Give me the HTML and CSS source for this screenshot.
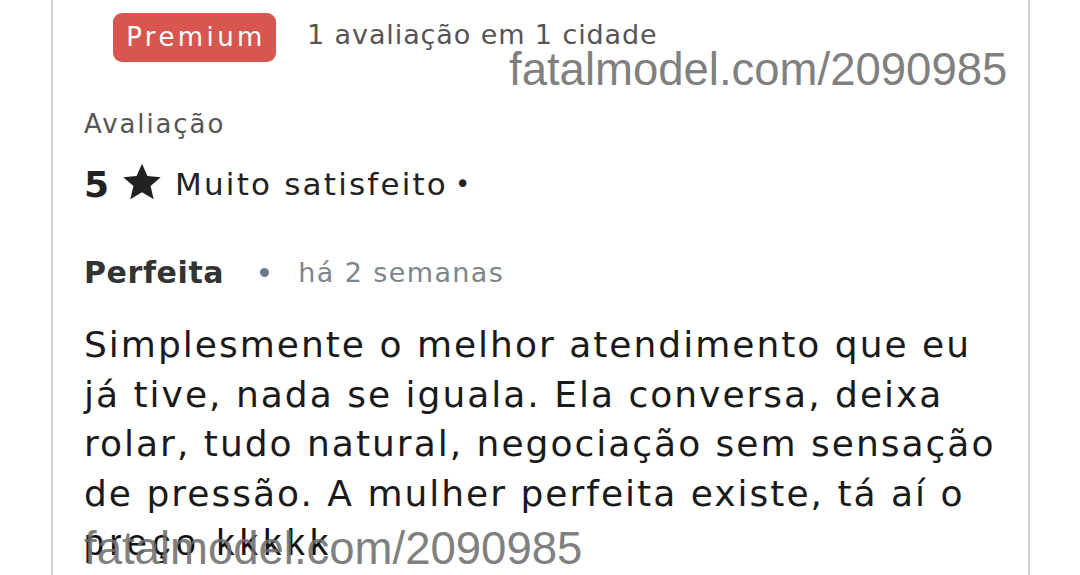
FILE: index.html
```html
<html>
    <head>
        <meta charset="utf-8" />
        <title>Avaliação</title>
        <link rel="stylesheet" href="styles.css">
    </head>
    <body>
        <div class="card">
            <div class="header">
                <span class="badge">Premium</span>
                <span class="count">1 avaliação em 1 cidade</span>
            </div>
            <div class="label">Avaliação</div>
            <div class="rating">
                <span class="score">5</span>
                <svg class="star" viewBox="0 0 24 24" width="42" height="42">
                    <path d="M12 1.6l3.1 7 7.6.7-5.8 5 1.8 7.5L12 17.8l-6.7 4 1.8-7.5-5.8-5 7.6-.7z" fill="#222222" />
                </svg>
                <span class="verdict">Muito satisfeito</span>
                <span class="dot">&bull;</span>
            </div>
            <div class="title_row">
                <span class="title">Perfeita</span>
                <span class="sep"></span>
                <span class="when">há 2 semanas</span>
            </div>
            <p class="review">
                Simplesmente o melhor atendimento que eu<br />
                já tive, nada se iguala. Ela conversa, deixa<br />
                rolar, tudo natural, negociação sem sensação<br />
                de pressão. A mulher perfeita existe, tá aí o<br />
                <span class="edited">preço kkkkk</span>
            </p>
            <span class="watermark top">fatalmodel.com/2090985</span>
            <span class="watermark bottom">fatalmodel.com/2090985</span>
        </div>
    </body>
</html>
```

FILE: styles.css
```css
body {
    margin: 0px;
    padding: 0px;
    background-color: white;
    overflow: hidden;
}

.card {
    position: relative;
    box-sizing: border-box;
    margin-left: 51px;
    width: 979px;
    height: 575px;
    padding: 13px 0px 0px 31px;
    border-left: 2px solid #cfcfcf;
    border-right: 2px solid #cfcfcf;
    font-family: 'DejaVu Sans', 'Open Sans', sans-serif;
    color: #1c1c1c;
}

.header {
    display: flex;
    align-items: flex-start;
    gap: 31px;
    margin-left: 29px;
    height: 49px;
}

.badge {
    box-sizing: border-box;
    height: 49px;
    width: 163px;
    padding-left: 3px;
    line-height: 49px;
    text-align: center;
    background-color: #d9554f;
    color: white;
    border-radius: 9px;
    font-size: 26px;
    letter-spacing: 3.4px;
}

.count {
    margin-top: 6px;
    color: #555555;
    font-size: 27px;
    letter-spacing: 0.9px;
}

.label {
    margin-top: 45px;
    color: #555555;
    font-size: 26px;
    line-height: 34px;
    letter-spacing: 1.9px;
}

.rating {
    display: flex;
    align-items: center;
    margin-top: 23px;
    height: 40px;
    color: #222222;
}

.score {
    font-size: 36px;
    font-weight: 700;
}

.star {
    margin-left: 12px;
    margin-top: -4px;
}

.verdict {
    margin-left: 12px;
    font-size: 31px;
    letter-spacing: 2.2px;
}

.dot {
    margin-left: 7px;
    font-size: 26px;
}

.title_row {
    display: flex;
    align-items: center;
    margin-top: 48px;
    height: 40px;
}

.title {
    font-size: 30px;
    font-weight: 700;
    color: #333333;
    letter-spacing: 0.6px;
}

.sep {
    width: 9px;
    height: 9px;
    margin: 0px 29px 0px 36px;
    border-radius: 50%;
    background-color: #6e7a86;
}

.when {
    font-size: 27px;
    color: #7d858c;
    letter-spacing: 1.4px;
}

.review {
    margin: 28px 0px 0px 0px;
    font-size: 36px;
    line-height: 49.5px;
    letter-spacing: 2px;
    color: #1a1a1a;
}

.edited {
    font-family: 'Liberation Sans', Arial, sans-serif;
    color: #111111;
    letter-spacing: 5.4px;
}

.watermark {
    position: absolute;
    font-family: 'Liberation Sans', Arial, sans-serif;
    font-size: 45.5px;
    color: rgba(110, 110, 110, 0.9);
    white-space: nowrap;
}

.watermark.top {
    top: 44px;
    left: 456px;
}

.watermark.bottom {
    top: 523px;
    left: 31px;
}
```
